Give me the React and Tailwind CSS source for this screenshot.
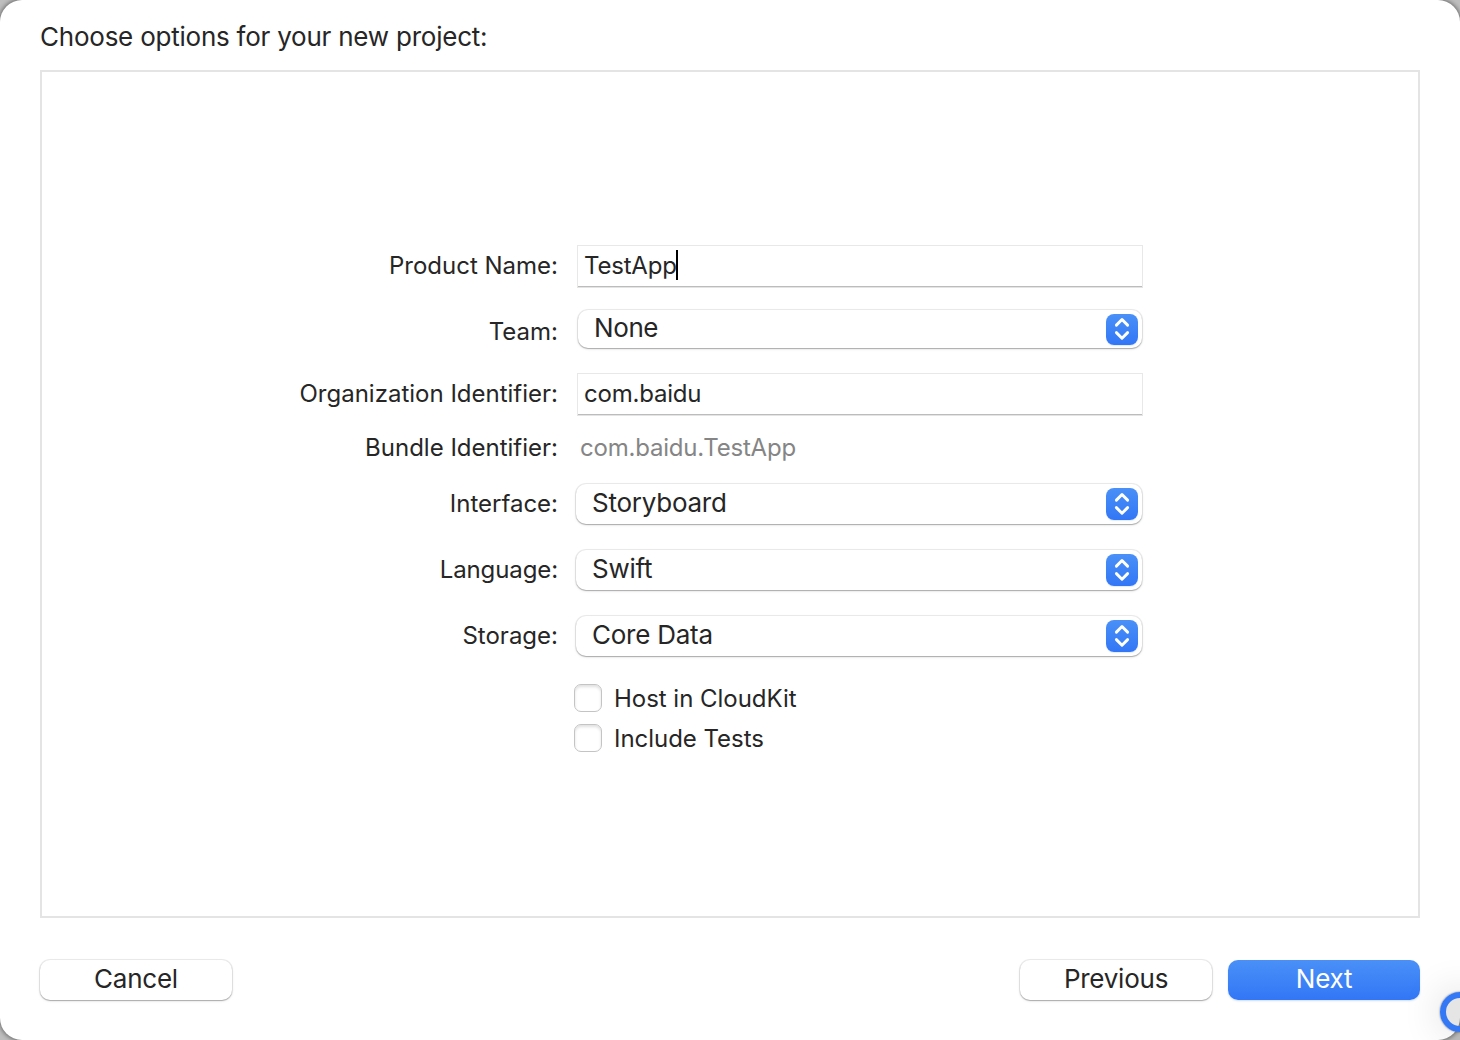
import React from "react";

function Chevrons({ className = "h-8" }) {
  return (
    <span className={`flex w-8 shrink-0 items-center justify-center rounded-[8px] bg-linear-to-b from-[#4a90f7] to-[#3376f6] shadow-[0_1px_1px_rgba(0,80,255,0.12)] ${className}`}>
      <svg width="32" height="32" viewBox="0 0 32 32" fill="none" stroke="white" strokeWidth="2.9" strokeLinecap="round" strokeLinejoin="round">
        <path d="M10.4 12.1 L16 6.5 L21.6 12.1" />
        <path d="M10.4 19.6 L16 25.2 L21.6 19.6" />
      </svg>
    </span>
  );
}

function Row({ label, className, labelClass = "", children }) {
  return (
    <div className={`flex ${className}`}>
      <div className={`w-[516px] shrink-0 text-right ${labelClass}`}>{label}</div>
      {children}
    </div>
  );
}

function Field({ children }) {
  return (
    <div className="ml-[19px] flex h-[42px] w-[566px] items-center border border-b-0 border-[#e8e8e8] bg-white pb-px pl-[6px] tracking-[-0.2px] shadow-[0_1px_0_#e4e4e4,inset_0_-1px_0_#bcbcbc]">
      {children}
    </div>
  );
}

function Popup({ className, chevrons, children }) {
  return (
    <div className={`flex items-center justify-between rounded-[10px] bg-white pr-1 pl-4 tracking-[-0.25px] shadow-[0_0_0_1px_rgba(0,0,0,0.07),0_1px_1px_rgba(0,0,0,0.2),0_1px_3px_rgba(0,0,0,0.12)] ${className}`}>
      {children}
      <Chevrons className={chevrons} />
    </div>
  );
}

function Check({ className, text }) {
  return (
    <label className={`ml-[532px] flex h-7 items-center ${className}`}>
      <span className="h-7 w-7 rounded-[7px] border border-[#c4c4c4] bg-white shadow-[inset_0_2px_3px_rgba(0,0,0,0.12)]" />
      <span className="mt-[2px] ml-3 tracking-[-0.03px]">{text}</span>
    </label>
  );
}

const button = "flex h-10 w-48 items-center justify-center rounded-[10px] text-[26px] leading-10 tracking-[-0.25px]";
const plain = "bg-white shadow-[0_0_0_1px_rgba(0,0,0,0.07),0_1px_1px_rgba(0,0,0,0.2),0_1px_3px_rgba(0,0,0,0.12)]";

export default function App() {
  return (
    <div className="relative h-[1040px] w-[1460px] overflow-hidden bg-[#bebebe] font-[Inter,sans-serif] text-[#262626]">
      <div className="flex h-[1040px] w-[1460px] flex-col rounded-[22px] bg-white px-10 shadow-[0_0_4px_1px_rgba(0,0,0,0.45)]">
        <h1 className="mt-[21px] h-[32px] text-[26px] leading-8 font-normal tracking-[-0.23px] whitespace-nowrap">
          Choose options for your new project:
        </h1>
        <main className="mt-[17px] h-[848px] shrink-0 border-2 border-[#e4e4e4] text-[24px] leading-[30px] whitespace-nowrap">
          <Row label="Product Name:" className="mt-[173px] h-[42px]" labelClass="pt-[6px]">
            <Field>
              TestApp
              <span className="-mt-[2px] -ml-px h-[30px] w-[2px] bg-black" />
            </Field>
          </Row>
          <Row label="Team:" className="mt-[22px] h-10" labelClass="pt-[8px]">
            <Popup className="mt-px ml-5 h-[38px] w-[564px]" chevrons="h-[31px]">
              <span className="-mt-[2px] text-[26px] tracking-[-0.4px]">None</span>
            </Popup>
          </Row>
          <Row label="Organization Identifier:" className="mt-6 h-[42px]" labelClass="pt-[6px]">
            <Field>com.baidu</Field>
          </Row>
          <Row label="Bundle Identifier:" className="mt-[18px] h-[30px]">
            <span className="ml-[22px] tracking-[-0.2px] text-[#858585]">com.baidu.TestApp</span>
          </Row>
          <Row label="Interface:" className="mt-[21px] h-10" labelClass="pt-[5px]">
            <Popup className="ml-[18px] h-10 w-[566px]">
              <span className="-mt-[2px] text-[26px]">Storyboard</span>
            </Popup>
          </Row>
          <Row label="Language:" className="mt-[26px] h-10" labelClass="pt-[5px] tracking-[-0.1px]">
            <Popup className="ml-[18px] h-10 w-[566px]">
              <span className="-mt-[2px] text-[26px]">Swift</span>
            </Popup>
          </Row>
          <Row label="Storage:" className="mt-[26px] h-10" labelClass="pt-[5px]">
            <Popup className="ml-[18px] h-10 w-[566px]">
              <span className="-mt-[2px] text-[26px]">Core Data</span>
            </Popup>
          </Row>
          <Check className="mt-7" text="Host in CloudKit" />
          <Check className="mt-3" text="Include Tests" />
        </main>
        <footer className="mt-[42px] flex gap-4">
          <button className={`${button} ${plain} mr-auto`}>
            <span className="-mt-[2px]">Cancel</span>
          </button>
          <button className={`${button} ${plain}`}>
            <span className="-mt-[2px]">Previous</span>
          </button>
          <button className={`${button} bg-linear-to-b from-[#4a90f7] to-[#3376f6] text-white shadow-[0_1px_2px_rgba(0,80,255,0.2)]`}>
            <span className="-mt-[2px]">Next</span>
          </button>
        </footer>
      </div>
      <div className="absolute top-[992px] left-[1440px] h-10 w-10 rounded-full border-[6px] border-[#3478f6] bg-black/10 shadow-[0_0_2px_rgba(0,0,0,0.6),0_0_40px_rgba(0,0,0,0.16)]" />
    </div>
  );
}
